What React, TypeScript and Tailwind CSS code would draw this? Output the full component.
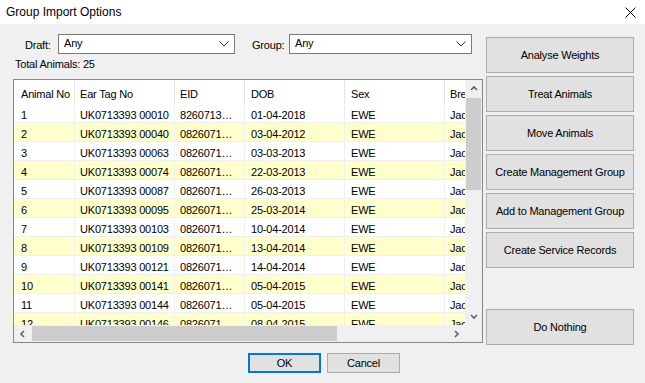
const columns = [
  { label: 'Animal No', w: 61, pl: 7 },
  { label: 'Ear Tag No', w: 100, pl: 5 },
  { label: 'EID', w: 70, pl: 5 },
  { label: 'DOB', w: 100, pl: 6 },
  { label: 'Sex', w: 100, pl: 6 },
  { label: 'Breed', w: 100, pl: 5 },
];

const rows = [
  ['1', 'UK0713393 00010', '8260713…', '01-04-2018'],
  ['2', 'UK0713393 00040', '0826071…', '03-04-2012'],
  ['3', 'UK0713393 00063', '0826071…', '03-03-2013'],
  ['4', 'UK0713393 00074', '0826071…', '22-03-2013'],
  ['5', 'UK0713393 00087', '0826071…', '26-03-2013'],
  ['6', 'UK0713393 00095', '0826071…', '25-03-2014'],
  ['7', 'UK0713393 00103', '0826071…', '10-04-2014'],
  ['8', 'UK0713393 00109', '0826071…', '13-04-2014'],
  ['9', 'UK0713393 00121', '0826071…', '14-04-2014'],
  ['10', 'UK0713393 00141', '0826071…', '05-04-2015'],
  ['11', 'UK0713393 00144', '0826071…', '05-04-2015'],
  ['12', 'UK0713393 00146', '0826071…', '08-04-2015'],
];

const actions = [
  'Analyse Weights',
  'Treat Animals',
  'Move Animals',
  'Create Management Group',
  'Add to Management Group',
  'Create Service Records',
];

function Chevron({ dir }: { dir: 'up' | 'down' | 'left' | 'right' }) {
  const d = {
    up: 'M1 5L4 2L7 5',
    down: 'M1 2L4 5L7 2',
    left: 'M5 1L2 4L5 7',
    right: 'M2 1L5 4L2 7',
  }[dir];
  return (
    <svg width="8" height="8" viewBox="0 0 8 8">
      <path d={d} fill="none" stroke="#606060" strokeWidth="1.6" />
    </svg>
  );
}

function Combo({ width }: { width: number }) {
  return (
    <div
      className="flex h-[20px] items-center justify-between border border-[#7a7a7a] bg-white pl-[5px] pr-[5px]"
      style={{ width }}
    >
      <span className="-mt-[1px]">Any</span>
      <svg width="10" height="6" viewBox="0 0 10 6">
        <path d="M0.5 0.5L5 5L9.5 0.5" fill="none" stroke="#333" strokeWidth="1" />
      </svg>
    </div>
  );
}

function Grid() {
  return (
    <div className="w-[451px] overflow-hidden">
      {/* header */}
      <div className="flex h-[24px] bg-white">
        {columns.map((c) => (
          <div
            key={c.label}
            className="flex shrink-0 items-center overflow-hidden border-r border-[#e5e5e5] pt-[4px] whitespace-nowrap"
            style={{ width: c.w, paddingLeft: c.pl }}
          >
            {c.label}
          </div>
        ))}
      </div>
      {/* rows */}
      {rows.map((r, i) => {
        const cells = [...r, 'EWE', 'Jacob'];
        return (
          <div
            key={r[0]}
            className={`flex h-[19px] border-b border-[#f0f0f0] ${i % 2 === 1 ? 'bg-[#ffffcc]' : 'bg-white'}`}
          >
            {cells.map((v, j) => (
              <div
                key={j}
                className="flex shrink-0 items-center overflow-hidden border-r border-[#f0f0f0] pt-[4px] whitespace-nowrap"
                style={{ width: columns[j].w, paddingLeft: columns[j].pl }}
              >
                {v}
              </div>
            ))}
          </div>
        );
      })}
    </div>
  );
}

export default function App() {
  return (
    <div className="h-[383px] w-[645px] overflow-hidden bg-[#f0f0f0] font-['Liberation_Sans',Arial,sans-serif] text-[11px] tracking-[-0.2px] text-black">
      {/* Title bar */}
      <div className="flex h-[24px] items-center justify-between bg-white pl-[6px] pr-[9px] tracking-normal">
        <span className="text-[12px]">Group Import Options</span>
        <svg width="11" height="11" viewBox="0 0 11 11">
          <path d="M0.5 0.5L10.5 10.5M10.5 0.5L0.5 10.5" stroke="#000" strokeWidth="1" />
        </svg>
      </div>

      <div className="flex">
        {/* Left side */}
        <div className="ml-[13px] w-[470px] pt-[10px]">
          <div className="flex h-[20px] items-center">
            <span className="ml-[12px] w-[33px] pt-[3px]">Draft:</span>
            <Combo width={177} />
            <span className="ml-[17px] w-[37px] pt-[3px]">Group:</span>
            <Combo width={183} />
          </div>
          <div className="mt-[2px] ml-[2px] h-[16px] leading-[16px]">Total Animals: 25</div>

          {/* Table */}
          <div className="mt-[7px] flex h-[264px] flex-col border border-[#828790] bg-white">
            <div className="flex h-[245px]">
              <Grid />
              <div className="flex w-[17px] flex-col bg-[#f0f0f0]">
                <div className="flex h-[17px] items-center justify-center">
                  <Chevron dir="up" />
                </div>
                <div className="mx-[1px] mt-[1px] h-[92px] bg-[#cdcdcd]" />
                <div className="flex-1" />
                <div className="flex h-[17px] items-center justify-center">
                  <Chevron dir="down" />
                </div>
              </div>
            </div>
            <div className="flex h-[17px]">
              <div className="flex w-[451px] bg-[#f0f0f0]">
                <div className="flex w-[17px] items-center justify-center">
                  <Chevron dir="left" />
                </div>
                <div className="my-[1px] ml-[1px] w-[305px] bg-[#cdcdcd]" />
                <div className="flex-1" />
                <div className="flex w-[17px] items-center justify-center">
                  <Chevron dir="right" />
                </div>
              </div>
              <div className="w-[17px] bg-[#f0f0f0]" />
            </div>
          </div>
        </div>

        {/* Right side actions */}
        <div className="ml-[3px] mt-[13px] flex w-[148px] flex-col gap-[3px]">
          {actions.map((a) => (
            <button
              key={a}
              type="button"
              className="h-[36px] border border-[#adadad] bg-[#e1e1e1] text-center"
            >
              {a}
            </button>
          ))}
          <button
            type="button"
            className="mt-[38px] h-[36px] border border-[#adadad] bg-[#e1e1e1] text-center"
          >
            Do Nothing
          </button>
        </div>
      </div>

      {/* Footer buttons */}
      <div className="mt-[8px] flex justify-center gap-[6px] pl-[3px]">
        <button type="button" className="h-[20px] w-[73px] border-2 border-[#0078d7] bg-[#e1e1e1]">
          OK
        </button>
        <button type="button" className="h-[20px] w-[73px] border border-[#adadad] bg-[#e1e1e1]">
          Cancel
        </button>
      </div>
    </div>
  );
}
